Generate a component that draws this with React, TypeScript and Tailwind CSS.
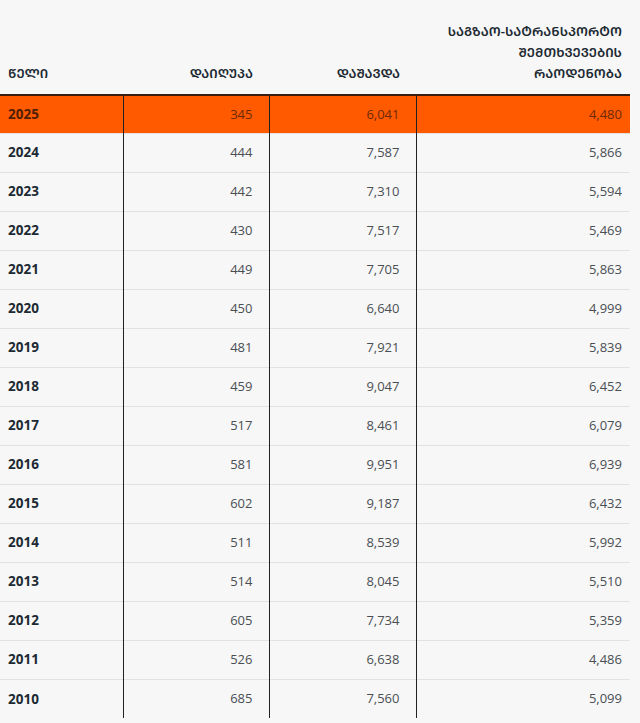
import React from "react";

const mt = (s: string) =>
  Array.from(s)
    .map((c) => {
      const cp = c.codePointAt(0)!;
      return cp >= 0x10d0 && cp <= 0x10fa ? String.fromCodePoint(cp + 0xbc0) : c;
    })
    .join("");

const rows: [string, string, string, string][] = [
  ["2025", "345", "6,041", "4,480"],
  ["2024", "444", "7,587", "5,866"],
  ["2023", "442", "7,310", "5,594"],
  ["2022", "430", "7,517", "5,469"],
  ["2021", "449", "7,705", "5,863"],
  ["2020", "450", "6,640", "4,999"],
  ["2019", "481", "7,921", "5,839"],
  ["2018", "459", "9,047", "6,452"],
  ["2017", "517", "8,461", "6,079"],
  ["2016", "581", "9,951", "6,939"],
  ["2015", "602", "9,187", "6,432"],
  ["2014", "511", "8,539", "5,992"],
  ["2013", "514", "8,045", "5,510"],
  ["2012", "605", "7,734", "5,359"],
  ["2011", "526", "6,638", "4,486"],
  ["2010", "685", "7,560", "5,099"],
];

const th =
  "align-bottom pb-[10px] text-[13px] font-semibold leading-[21px] text-[#1d2a33] font-['Noto_Sans_Georgian','Noto_Sans',sans-serif]";

export default function App() {
  return (
    <div className="min-h-[723px] w-[640px] bg-[#f7f7f7] font-['Open_Sans','Noto_Sans',sans-serif]">
      <table className="w-[630px] border-collapse table-fixed">
        <colgroup>
          <col className="w-[123px]" />
          <col className="w-[146px]" />
          <col className="w-[147px]" />
          <col className="w-[214px]" />
        </colgroup>
        <thead>
          <tr className="h-[95px] border-b-2 border-[#3a1f10]">
            <th className={th + " text-left pl-2"}>{mt("წელი")}</th>
            <th className={th + " text-right pr-4"}>{mt("დაიღუპა")}</th>
            <th className={th + " text-right pr-4"}>{mt("დაშავდა")}</th>
            <th className={th + " text-right pr-2 pl-6"}>
              {mt("საგზაო-სატრანსპორტო შემთხვევების რაოდენობა")}
            </th>
          </tr>
        </thead>
        <tbody>
          {rows.map((r, i) => {
            const hi = i === 0;
            const num =
              "text-right text-[13px] border-l border-[#222] " +
              (hi ? "text-[#6e2a08]" : "text-[#4a4f54]");
            return (
              <tr
                key={r[0]}
                className={
                  hi ? "h-[38px] bg-[#ff5a00]" : "h-[39px] border-t border-[#e2e2e2]"
                }
              >
                <td
                  className={
                    "pl-2 text-left text-[13.5px] font-bold " +
                    (hi ? "text-[#4f1f06]" : "text-[#1d2a33]")
                  }
                >
                  {r[0]}
                </td>
                <td className={num + " pr-4"}>{r[1]}</td>
                <td className={num + " pr-4"}>{r[2]}</td>
                <td className={num + " pr-2"}>{r[3]}</td>
              </tr>
            );
          })}
        </tbody>
      </table>
    </div>
  );
}
